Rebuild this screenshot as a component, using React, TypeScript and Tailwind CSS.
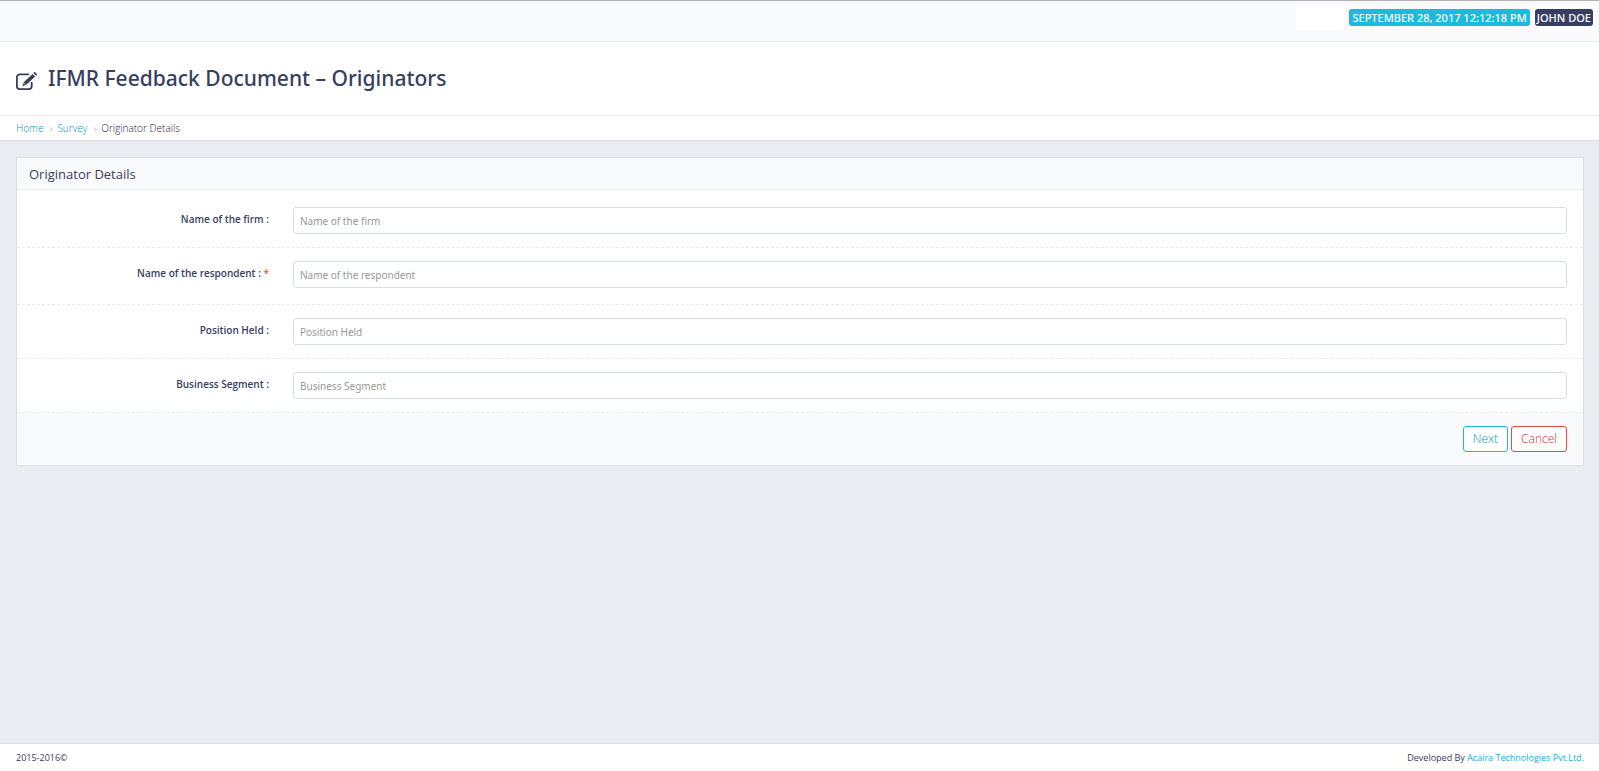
const fields = [
  { id: "firm", label: "Name of the firm", required: false, row: "pt-[17px] pb-[13px]" },
  { id: "respondent", label: "Name of the respondent", required: true, row: "pt-[13px] pb-[16px]" },
  { id: "position", label: "Position Held", required: false, row: "py-[13px]" },
  { id: "segment", label: "Business Segment", required: false, row: "py-[13px]" },
];

function EditIcon() {
  return (
    <svg className="h-[20px] w-[22px] shrink-0" viewBox="0 0 22 20" fill="none" aria-hidden="true">
      <path
        d="M12.4 3.3H3.8A2.9 2.9 0 0 0 .9 6.2v9.1a2.9 2.9 0 0 0 2.9 2.9h9a2.9 2.9 0 0 0 2.9-2.9v-3.7"
        stroke="currentColor"
        strokeWidth="1.8"
        strokeLinecap="round"
      />
      <path d="M16.5 2.9l2.7 2.6-8.6 8-4.3 1.9 1.7-4.4z" fill="currentColor" />
      <path d="M17.4 2.1l1.3-1.3 2.6 2.6-1.3 1.3z" fill="currentColor" />
      <path d="M8 12.2l1.4 1.4" stroke="#fff" strokeWidth="0.7" />
    </svg>
  );
}

function Chevron() {
  return (
    <svg className="mr-1 ml-[6px] mt-[2px] h-[5px] w-[4px]" viewBox="0 0 4 5" fill="none" aria-hidden="true">
      <path d="M1 .5l2 2-2 2" stroke="#b4b8c0" />
    </svg>
  );
}

export default function App() {
  return (
    <div className="flex min-h-screen flex-col bg-[#e9ecf1] font-['Open_Sans','Noto_Sans',sans-serif] text-[#373e5e]">
      <header className="flex h-[42px] items-start justify-end border-t border-b border-t-[#b7b0b8] border-b-[#e6eaee] bg-[#f9fafc] pt-[3px] pr-[4px]">
        <div className="h-[26px] w-[50px] bg-white" />
        <time className="mt-[5px] ml-[3px] h-[17px] rounded-[3px] bg-[#1cb9e1] px-[3px] font-['Noto_Sans',sans-serif] text-[11px] leading-[17px] font-medium text-white">
          SEPTEMBER 28, 2017 12:12:18 PM
        </time>
        <div className="ml-[3px] bg-[#fcfdfe] px-[2px] pt-[5px] pb-[5px]">
          <div className="h-[17px] rounded-[3px] bg-[#373e61] px-[2px] font-['Noto_Sans',sans-serif] text-[11px] leading-[17px] font-medium text-white">
            JOHN DOE
          </div>
        </div>
      </header>

      <div className="flex h-[74px] items-start border-b border-[#e9ecf0] bg-white px-4 pt-[21px]">
        <div className="pt-[8px]">
          <EditIcon />
        </div>
        <h1 className="ml-[10px] font-['Noto_Sans',sans-serif] text-[21px] leading-[30px] font-medium">IFMR Feedback Document – Originators</h1>
      </div>

      <nav aria-label="Breadcrumb" className="h-[25px] border-b border-[#d8dfe6] bg-white px-4">
        <ol className="flex h-[24px] items-center text-[10px] font-light text-[#1c2244]">
          <li><a href="#home" className="text-[#0098c4]">Home</a></li>
          <Chevron />
          <li><a href="#survey" className="text-[#0098c4]">Survey</a></li>
          <Chevron />
          <li>Originator Details</li>
        </ol>
      </nav>

      <main className="flex-1 pt-4 pr-[15px] pl-4">
        <form className="border border-[#d8dfe6] bg-white" onSubmit={(e) => e.preventDefault()}>
          <h2 className="h-[32px] border-b border-[#e9ecf0] bg-[#f9fafc] px-3 text-[13px] leading-[32px]">
            Originator Details
          </h2>
          {fields.map((f) => (
            <div key={f.id} className={`flex border-b border-dashed border-[#e8ebee] ${f.row}`}>
              <label htmlFor={f.id} className="w-1/6 shrink-0 pr-[9px] text-right text-[10px] leading-[25px] font-semibold">
                {f.label} :{f.required && <span className="text-[#e9573f]"> *</span>}
              </label>
              <input
                id={f.id}
                type="text"
                required={f.required}
                placeholder={f.label}
                className="mr-4 ml-[15px] h-[27px] min-w-0 flex-1 rounded-[3px] border border-[#d8dee8] bg-white px-[6px] font-['Noto_Sans',sans-serif] text-[10px] placeholder:text-[#999999] placeholder:opacity-100"
              />
            </div>
          ))}
          <div className="flex justify-end gap-[3px] bg-[#f9fafc] py-[13px] pr-4">
            <button type="submit" className="h-[26px] rounded-[3px] border border-[#1cb9e1] bg-white px-[9px] text-[12px] leading-[24px] font-light text-[#0098c4]">
              Next
            </button>
            <button type="button" className="h-[26px] rounded-[3px] border border-[#e64c3c] bg-white px-[9px] text-[12px] leading-[24px] font-light text-[#d92c1c]">
              Cancel
            </button>
          </div>
        </form>
      </main>

      <footer className="flex h-[28px] items-center justify-between border-t border-[#d8dce8] bg-white pr-[15px] pl-4 text-[9px]">
        <span>2015-2016©</span>
        <span>
          Developed By <a href="#acaira" className="text-[#1cb0e1]">Acaira Technologies Pvt.Ltd.</a>
        </span>
      </footer>
    </div>
  );
}
